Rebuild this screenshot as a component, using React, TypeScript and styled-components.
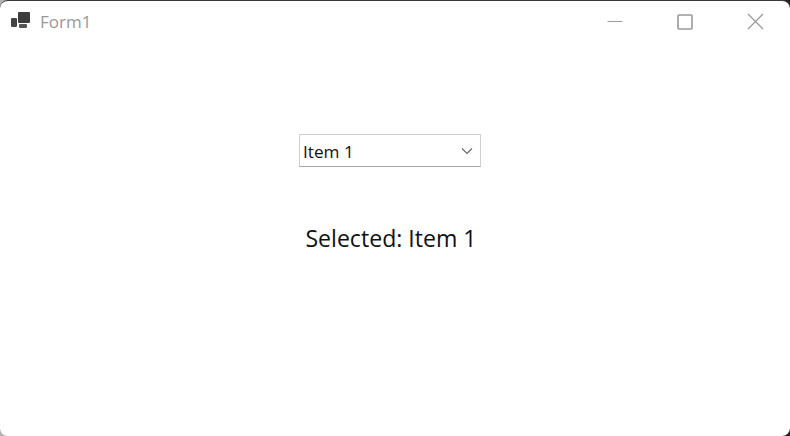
import React from "react";
import styled, { createGlobalStyle } from "styled-components";

const Global = createGlobalStyle`
  html, body { margin: 0; padding: 0; background: #2a2a2a; }
  body { font-family: "Open Sans", "Noto Sans", "Liberation Sans", sans-serif; }
`;

const Desktop = styled.div`
  width: 790px;
  height: 436px;
  overflow: hidden;
  background: linear-gradient(75deg, #b4b4b4 0%, #b4b4b4 20%, #222 60%);
`;

const Window = styled.div`
  box-sizing: border-box;
  width: 790px;
  height: 436px;
  background: #fff;
  border-top: 1px solid #3a3a3a;
  border-radius: 8px;
  display: flex;
  flex-direction: column;
`;

const TitleBar = styled.header`
  height: 41px;
  display: flex;
  align-items: center;
  padding-left: 11px;
`;

const AppIcon = styled.svg`
  width: 19px;
  height: 17px;
  margin-top: -2px;
  flex: none;
`;

const Title = styled.span`
  margin-left: 10px;
  font-size: 17px;
  color: #999;
`;

const WindowButtons = styled.div`
  margin-left: auto;
  display: flex;
  align-items: center;
`;

const WindowButton = styled.div`
  width: 70px;
  height: 41px;
  display: flex;
  align-items: center;
  justify-content: center;
`;

const Client = styled.main`
  flex: 1;
  display: flex;
  flex-direction: column;
  align-items: center;
  padding: 92px 10px 0 0;
`;

const Combo = styled.div`
  box-sizing: border-box;
  width: 182px;
  height: 33px;
  display: flex;
  align-items: center;
  padding: 1px 6px 0 3px;
  background: #fff;
  border: 1px solid #cfcfcf;
  border-bottom: 1px solid #a8a8a8;
  border-radius: 1px;
  font-size: 17.2px;
  color: #111;
`;

const ComboText = styled.span`
  flex: 1;
`;

const Chevron = styled.svg`
  margin-top: -1px;
  flex: none;
`;

const Selected = styled.div`
  margin-top: 53px;
  padding-left: 2px;
  font-size: 23.1px;
  line-height: 36px;
  color: #111;
`;

export default function App() {
  return (
    <>
      <Global />
      <Desktop>
        <Window>
          <TitleBar>
            <AppIcon viewBox="0 0 19 17">
              <rect x="0" y="6" width="6" height="9" rx="1" fill="#444" />
              <rect x="7" y="0" width="12" height="11" rx="1" fill="#3c3c3c" />
              <rect x="8" y="12" width="8" height="4" rx="1" fill="#555" />
            </AppIcon>
            <Title>Form1</Title>
            <WindowButtons>
              <WindowButton>
                <svg width="16" height="16" viewBox="0 0 16 16">
                  <path d="M0.5 7.5H15.5" stroke="#999" strokeWidth="1" fill="none" />
                </svg>
              </WindowButton>
              <WindowButton>
                <svg width="16" height="16" viewBox="0 0 16 16">
                  <rect x="1" y="1" width="14" height="14" rx="1" stroke="#999" strokeWidth="1.6" fill="none" />
                </svg>
              </WindowButton>
              <WindowButton>
                <svg width="17" height="17" viewBox="0 0 17 17">
                  <path d="M1 1L16 16M16 1L1 16" stroke="#999" strokeWidth="1.2" fill="none" />
                </svg>
              </WindowButton>
            </WindowButtons>
          </TitleBar>
          <Client>
            <Combo>
              <ComboText>Item 1</ComboText>
              <Chevron width="14" height="14" viewBox="0 0 14 14">
                <path d="M2 4.5L7 9.5L12 4.5" stroke="#666" strokeWidth="1.1" fill="none" />
              </Chevron>
            </Combo>
            <Selected>Selected: Item 1</Selected>
          </Client>
        </Window>
      </Desktop>
    </>
  );
}
